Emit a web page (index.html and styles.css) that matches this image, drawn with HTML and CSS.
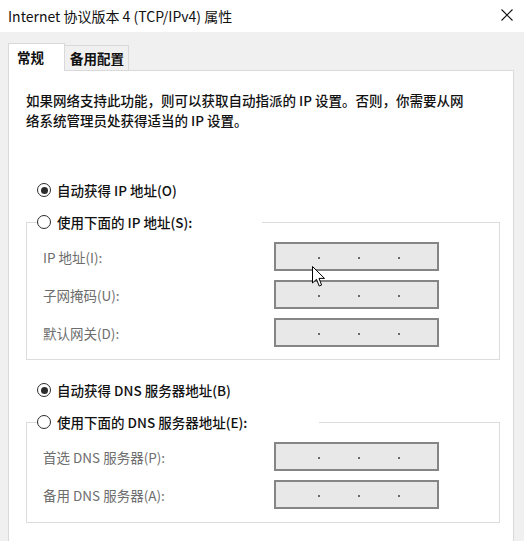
FILE: index.html
```html
<!DOCTYPE html>
<html lang="zh-CN">
<head>
    <meta charset="UTF-8">
    <meta name="viewport" content="width=device-width, initial-scale=1.0">
    <title>Internet 协议版本 4 (TCP/IPv4) 属性</title>
    <link rel="stylesheet" href="styles.css">
</head>
<body>
    <div class="window">
        <div class="titlebar">
            <span class="title">Internet 协议版本 4 (TCP/IPv4) 属性</span>
            <svg class="close" width="12" height="12" viewBox="0 0 12 12">
                <path d="M0.5 0.5 L11.5 11.5 M11.5 0.5 L0.5 11.5" stroke="#111" stroke-width="1.1" fill="none"/>
            </svg>
        </div>

        <div class="client">
            <div class="tabs">
                <div class="tab tab-active">常规</div>
                <div class="tab">备用配置</div>
            </div>

            <div class="panel">
                <p class="intro">如果网络支持此功能，则可以获取自动指派的 IP 设置。否则，你需要从网<br>络系统管理员处获得适当的 IP 设置。</p>

                <div class="radio radio-top">
                    <span class="dot checked"></span>
                    <span>自动获得 IP 地址(O)</span>
                </div>

                <fieldset class="group">
                    <legend class="legend-ip">
                        <span class="radio">
                            <span class="dot"></span>
                            <span>使用下面的 IP 地址(S):</span>
                        </span>
                    </legend>
                    <div class="fields">
                        <span class="field-label">IP 地址(I):</span>
                        <span class="ip-box"><i></i><i></i><i></i></span>
                        <span class="field-label">子网掩码(U):</span>
                        <span class="ip-box"><i></i><i></i><i></i></span>
                        <span class="field-label">默认网关(D):</span>
                        <span class="ip-box"><i></i><i></i><i></i></span>
                    </div>
                </fieldset>

                <div class="radio radio-top radio-dns">
                    <span class="dot checked"></span>
                    <span>自动获得 DNS 服务器地址(B)</span>
                </div>

                <fieldset class="group group-dns">
                    <legend class="legend-dns">
                        <span class="radio">
                            <span class="dot"></span>
                            <span>使用下面的 DNS 服务器地址(E):</span>
                        </span>
                    </legend>
                    <div class="fields">
                        <span class="field-label">首选 DNS 服务器(P):</span>
                        <span class="ip-box"><i></i><i></i><i></i></span>
                        <span class="field-label">备用 DNS 服务器(A):</span>
                        <span class="ip-box"><i></i><i></i><i></i></span>
                    </div>
                </fieldset>
            </div>
        </div>

        <!-- mouse pointer over the first address box -->
        <svg class="cursor" width="14" height="22" viewBox="0 0 14 22">
            <path d="M0.5 0.5 L0.5 17 L4.5 13.3 L7.2 20 L9.6 19 L7 12.4 L12.5 12.4 Z" fill="#fff" stroke="#000" stroke-width="1" stroke-linejoin="round"/>
        </svg>
    </div>
</body>
</html>
```

FILE: styles.css
```css
* {
    box-sizing: border-box;
}

body {
    margin: 0;
    font-family: "Noto Sans CJK SC", "Noto Sans", sans-serif;
    font-size: 13.5px;
    color: #111;
    background-color: #f0f0f0;
}

.window {
    position: relative;
    width: 524px;
    height: 541px;
    overflow: hidden;
}

.titlebar {
    height: 32px;
    background-color: #ffffff;
    display: flex;
    align-items: center;
    justify-content: space-between;
    padding: 0 11px 0 8px;
}

.title {
    font-size: 14px;
    color: #111;
}

.close {
    display: block;
    margin-top: -2px;
}

.client {
    padding: 11px 10px 0 8px;
}

/* tabs */
.tabs {
    display: flex;
    align-items: flex-start;
    height: 28px;
    margin-bottom: -1px;
}

.tab {
    position: relative;
    height: 25px;
    margin-top: 2px;
    width: 64px;
    padding-left: 5px;
    line-height: 24px;
    font-weight: 700;
    background-color: #f0f0f0;
    border: 1px solid #d9d9d9;
    border-bottom: none;
    border-left: none;
}

.tab-active {
    z-index: 1;
    height: 28px;
    margin-top: 0;
    width: 57px;
    padding-left: 8px;
    line-height: 27px;
    background-color: #ffffff;
    border-left: 1px solid #d9d9d9;
}

/* page */
.panel {
    position: relative;
    height: 480px;
    background-color: #ffffff;
    border: 1px solid #d9d9d9;
    padding: 19px 13px 0 17px;
}

.intro {
    margin: 0;
    line-height: 20px;
    font-weight: 500;
}

.radio {
    display: flex;
    align-items: center;
    gap: 6px;
    height: 20px;
    white-space: nowrap;
    font-weight: 500;
}

.radio-top {
    margin: 50px 0 0 11px;
}

.radio-dns {
    margin-top: 20px;
}

.dot {
    width: 14px;
    height: 14px;
    border: 1.6px solid #2b2b2b;
    border-radius: 50%;
    display: flex;
    align-items: center;
    justify-content: center;
    background-color: #ffffff;
}

.dot.checked::after {
    content: "";
    width: 7px;
    height: 7px;
    border-radius: 50%;
    background-color: #2b2b2b;
}

.group {
    margin: 12px 0 0;
    padding: 10px 0 12px 0;
    border: 1px solid #dcdcdc;
    min-width: 0;
}

.group-dns {
    padding-bottom: 13px;
}

.group legend {
    padding: 0;
    margin-left: 10px;
    background-color: #ffffff;
}

.legend-ip {
    width: 225px;
}

.legend-dns {
    width: 282px;
}

.fields {
    display: grid;
    grid-template-columns: 231px 165px;
    grid-auto-rows: 29px;
    row-gap: 9px;
    padding-left: 16px;
    align-items: center;
}

.field-label {
    color: #6d6d6d;
}

.ip-box {
    height: 29px;
    display: flex;
    align-items: center;
    gap: 38px;
    padding: 3px 0 0 42px;
    background-color: #e8e8e8;
    border: 2px solid #858585;
}

.ip-box i {
    width: 2px;
    height: 2px;
    background-color: #6a6a6a;
}

.cursor {
    position: absolute;
    left: 312px;
    top: 266px;
}
```
